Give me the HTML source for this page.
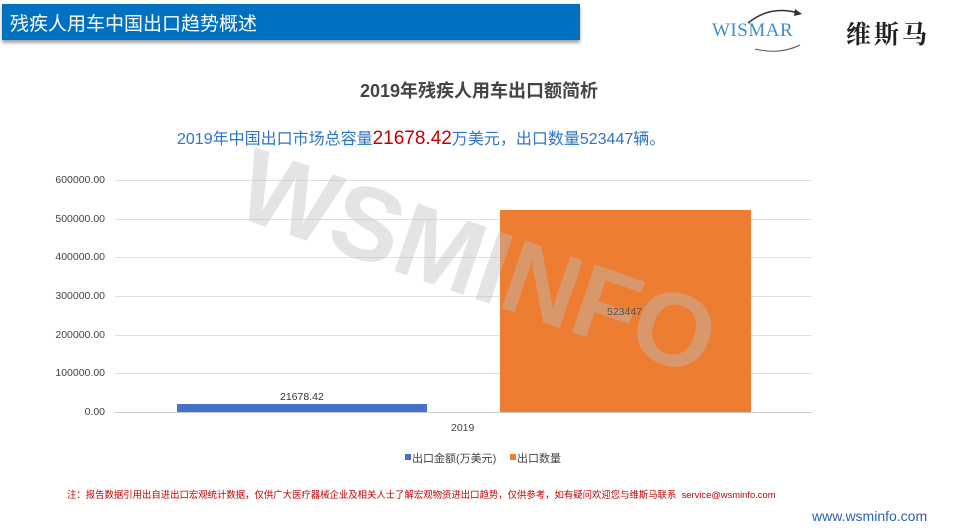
<!DOCTYPE html>
<html><head><meta charset="utf-8"><style>
body{margin:0;width:959px;height:529px;background:#fff;position:relative;overflow:hidden;font-family:"Liberation Sans","Noto Sans CJK SC",sans-serif}
.a{position:absolute;white-space:nowrap}
.yl{position:absolute;right:854px;font-size:10.5px;color:#444;text-align:right}
.g{position:absolute;left:115px;width:697px;height:1px;background:#e0e0e0}
</style></head><body>
<div class="a" style="left:2px;top:4px;width:578px;height:36px;background:#0070c0;box-shadow:0 3px 3px rgba(0,0,0,.35)"></div>
<div class="a" style="left:10px;top:9px;font-size:19px;color:#fff">残疾人用车中国出口趋势概述</div>
<div class="a" style="left:712px;top:20px;font-family:'Liberation Serif',serif;font-size:19px;color:#3a8fd0;letter-spacing:0.5px">WISMAR</div>
<svg class="a" style="left:740px;top:3px" width="70" height="50"><path d="M8 20 Q30 2 58 10" stroke="#333" stroke-width="1.5" fill="none"/><path d="M55 6 L62 11 L54 13Z" fill="#333"/><path d="M15 46 Q40 52 60 42" stroke="#555" stroke-width="1" fill="none"/></svg>
<div class="a" style="left:846px;top:15px;font-size:25px;font-weight:bold;color:#222;font-family:'Noto Serif CJK SC',serif;letter-spacing:3px">维斯马</div>
<div class="a" style="left:360px;top:77px;font-size:18px;font-weight:bold;color:#444">2019年残疾人用车出口额简析</div>
<div class="a" style="left:177px;top:125px;font-size:16px;color:#2e74c8">2019年中国出口市场总容量<span style="color:#c00000;font-size:19px">21678.42</span>万美元，出口数量523447辆。</div>
<div class="g" style="top:180px"></div><div class="g" style="top:219px"></div><div class="g" style="top:257px"></div><div class="g" style="top:296px"></div><div class="g" style="top:335px"></div><div class="g" style="top:373px"></div><div class="g" style="top:412px;background:#ccc"></div>
<div class="yl" style="top:174px">600000.00</div><div class="yl" style="top:213px">500000.00</div><div class="yl" style="top:251px">400000.00</div><div class="yl" style="top:290px">300000.00</div><div class="yl" style="top:329px">200000.00</div><div class="yl" style="top:367px">100000.00</div><div class="yl" style="top:406px">0.00</div>
<div class="a" style="left:177px;top:404px;width:250px;height:8px;background:#4472c4"></div>
<div class="a" style="left:500px;top:210px;width:251px;height:202px;background:#ed7d31"></div>
<div class="a" style="left:262px;top:126px;font-size:104px;font-weight:bold;color:rgba(190,190,190,.42);transform:rotate(19deg);transform-origin:0 0;letter-spacing:-1px">WSMINFO</div>
<div class="a" style="left:280px;top:391px;font-size:10.5px;color:#333">21678.42</div>
<div class="a" style="left:607px;top:306px;font-size:10.5px;color:#555">523447</div>
<div class="a" style="left:451px;top:422px;font-size:10.5px;color:#444">2019</div>
<div class="a" style="left:405px;top:454px;width:6px;height:6px;background:#4472c4"></div>
<div class="a" style="left:412px;top:450px;font-size:11px;color:#444">出口金额(万美元)</div>
<div class="a" style="left:510px;top:454px;width:6px;height:6px;background:#ed7d31"></div>
<div class="a" style="left:517px;top:450px;font-size:11px;color:#444">出口数量</div>
<div class="a" style="left:67px;top:487px;font-size:9.4px;color:#c00000">注：报告数据引用出自进出口宏观统计数据，仅供广大医疗器械企业及相关人士了解宏观物资进出口趋势，仅供参考，如有疑问欢迎您与维斯马联系&nbsp; service@wsminfo.com</div>
<div class="a" style="left:812px;top:508px;font-size:14px;color:#2e5fb0">www.wsminfo.com</div>
</body></html>
